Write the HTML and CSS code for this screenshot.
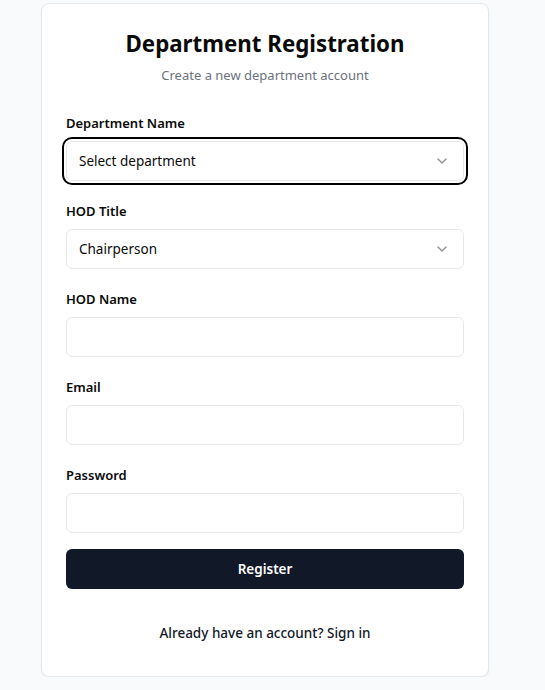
FILE: index.html
```html
<!DOCTYPE html>
<html>
<head>
<meta charset="utf-8">
<link rel="stylesheet" href="styles.css">
</head>
<body>
<div class="page">
  <div class="card">
    <div class="header">
      <h1 class="title">Department Registration</h1>
      <p class="subtitle">Create a new department account</p>
    </div>
    <form class="form">
      <div class="field">
        <label class="label">Department Name</label>
        <div class="select focused">
          <span>Select department</span>
          <svg class="chev" width="16" height="16" viewBox="0 0 24 24" fill="none" stroke="currentColor" stroke-width="2" stroke-linecap="round" stroke-linejoin="round"><path d="m6 9 6 6 6-6"/></svg>
        </div>
      </div>
      <div class="field">
        <label class="label">HOD Title</label>
        <div class="select">
          <span>Chairperson</span>
          <svg class="chev" width="16" height="16" viewBox="0 0 24 24" fill="none" stroke="currentColor" stroke-width="2" stroke-linecap="round" stroke-linejoin="round"><path d="m6 9 6 6 6-6"/></svg>
        </div>
      </div>
      <div class="field">
        <label class="label">HOD Name</label>
        <div class="input"></div>
      </div>
      <div class="field">
        <label class="label">Email</label>
        <div class="input"></div>
      </div>
      <div class="field">
        <label class="label">Password</label>
        <div class="input"></div>
      </div>
      <button type="button" class="btn">Register</button>
    </form>
    <p class="footer">Already have an account? Sign in</p>
  </div>
</div>
</body>
</html>
```
FILE: styles.css
```css
* { box-sizing: border-box; }
html, body { margin: 0; padding: 0; }
body {
  background: #f9fafb;
  font-family: "Noto Sans", "Open Sans", sans-serif;
  color: #0a0a0a;
}
.page {
  padding: 3px 0 0 41px;
}
.card {
  width: 448px;
  background: #fff;
  border: 1px solid #e5e7eb;
  border-radius: 8px;
  box-shadow: 0 1px 2px rgba(0,0,0,0.05);
  padding: 24px 24px 33px;
}
.header {
  text-align: center;
}
.title {
  margin: 0;
  font-size: 22.3px;
  line-height: 32px;
  font-weight: 700;
  color: #0a0a0a;
}
.subtitle {
  margin: 5px 0 0;
  font-size: 13px;
  line-height: 20px;
  color: #6b7280;
}
.form {
  margin-top: 28px;
  display: flex;
  flex-direction: column;
  gap: 20px;
}
.field {
  display: flex;
  flex-direction: column;
  gap: 8px;
}
.label {
  font-size: 13px;
  line-height: 20px;
  font-weight: 600;
  color: #0a0a0a;
}
.select, .input {
  height: 40px;
  border: 1px solid #e5e7eb;
  border-radius: 6px;
  background: #fff;
}
.select {
  display: flex;
  align-items: center;
  justify-content: space-between;
  padding: 0 12px;
  font-size: 13.5px;
  color: #0a0a0a;
}
.select.focused {
  outline: 2px solid #000;
  outline-offset: 2px;
}
.chev {
  color: #8a8f98;
  margin-right: 1px;
}
.btn {
  margin-top: -4px;
  height: 40px;
  border: none;
  border-radius: 6px;
  background: #111827;
  color: #fff;
  font-family: inherit;
  font-size: 13.5px;
  font-weight: 600;
}
.footer {
  margin: 34px 0 0;
  text-align: center;
  font-size: 13.5px;
  line-height: 20px;
  font-weight: 500;
  color: #111827;
}
```
